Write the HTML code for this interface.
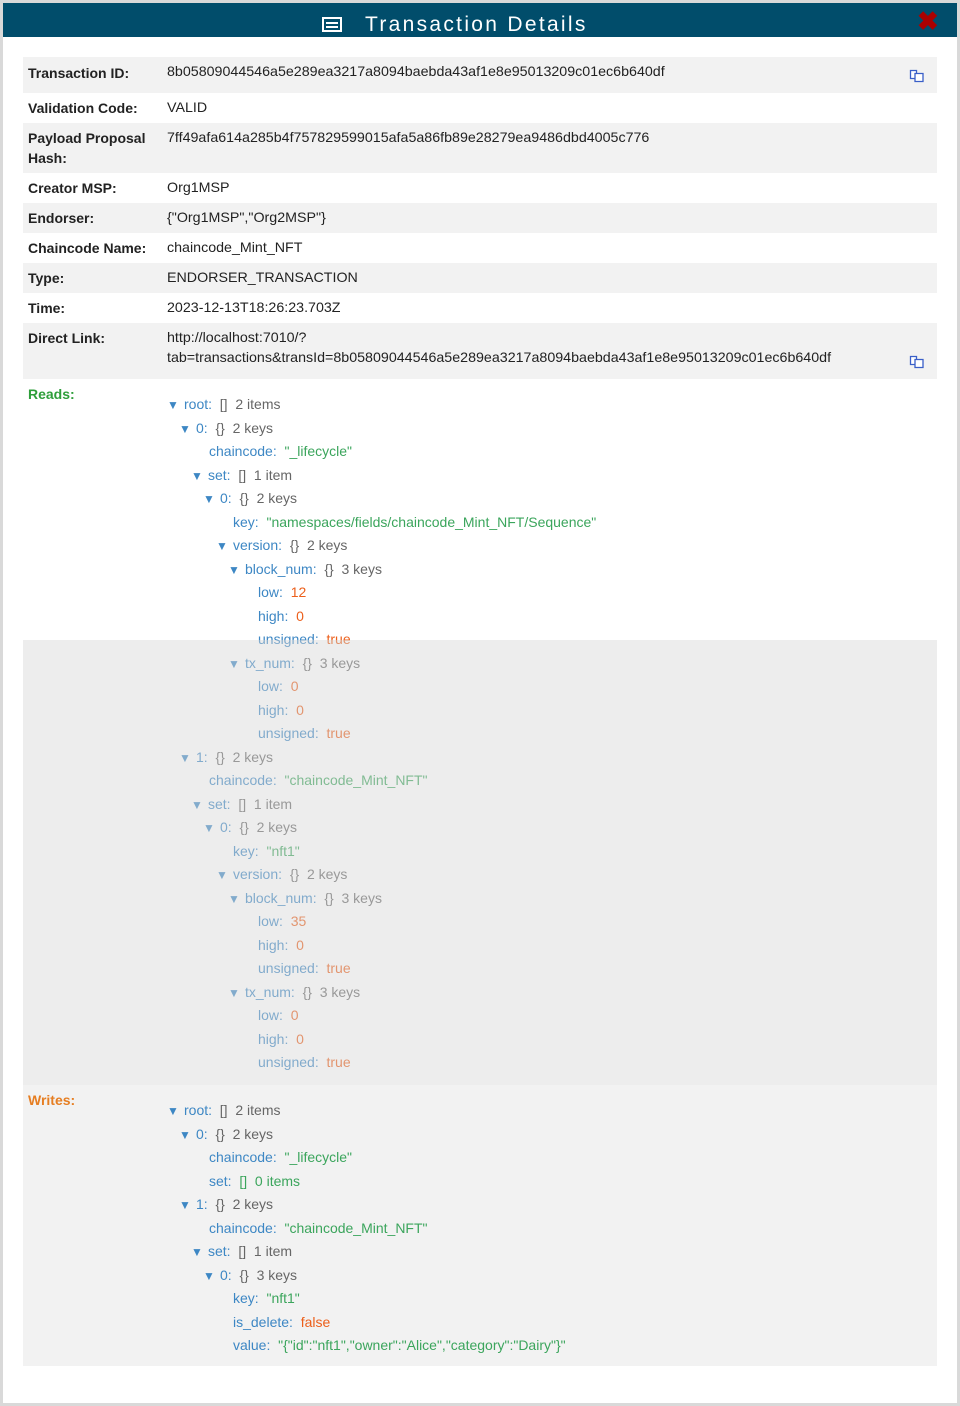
<!DOCTYPE html>
<html><head><meta charset="utf-8">
<style>
*{margin:0;padding:0;box-sizing:border-box}
html,body{width:960px;height:1406px;background:#d9d9d9;font-family:"Liberation Sans",Arial,sans-serif;font-size:14px;color:#222;overflow:hidden}
.modal{position:absolute;left:3px;top:3px;width:954px;height:1400px;background:#fff}
.hdr{position:absolute;left:0;top:0;width:954px;height:34px;background:#014d6b;color:#fff;font-size:21px;letter-spacing:2.3px;line-height:34px}
.hdr .t{position:absolute;left:362px;top:5px}
.ico{position:absolute;left:319px;top:14px;width:20px;height:15px;border:2px solid #fff;background:#014d6b}
.ico i{position:absolute;left:2px;right:2px;height:2px;background:#fff}
.x{position:absolute;left:914px;top:5px;color:#a00;font-size:26px;font-weight:bold;line-height:26px}
.row{position:absolute;left:20px;width:914px}
.g{background:#f2f2f2}
.lab{position:absolute;left:5px;font-weight:bold;line-height:20px}
.val{position:absolute;left:144px;line-height:20px;font-size:14.25px}
.cp{position:absolute;left:886px;width:16px;height:16px}
.tree div{position:absolute;white-space:nowrap;line-height:20px}
.k{color:#3d87c4}.s{color:#3ba55c}.n{color:#ec5f1b}.m{color:#666}
.tri{color:#3d87c4;font-size:12px;display:inline-block;width:17px}
</style></head><body>
<div class="modal">
<div class="hdr"><div class="ico"><i style="top:3px"></i><i style="top:7px"></i></div><span class="t">Transaction Details</span><span class="x">✖</span></div>

<div class="row g" style="top:54px;height:36px"><div class="lab" style="top:6px">Transaction ID:</div><div class="val" style="top:5px">8b05809044546a5e289ea3217a8094baebda43af1e8e95013209c01ec6b640df</div>
<svg class="cp" style="top:10px" viewBox="0 0 16 16"><path d="M1.5 3.5h6v8h-6z" fill="#fff" stroke="#3a5fc8" stroke-width="1.3"/><path d="M6 6.5h8v8H6z" fill="#fff" stroke="#3a5fc8" stroke-width="1.3"/></svg></div>
<div class="row" style="top:90px;height:30px"><div class="lab" style="top:5px">Validation Code:</div><div class="val" style="top:5px">VALID</div></div>
<div class="row g" style="top:120px;height:50px"><div class="lab" style="top:5px">Payload Proposal<br>Hash:</div><div class="val" style="top:5px">7ff49afa614a285b4f757829599015afa5a86fb89e28279ea9486dbd4005c776</div></div>
<div class="row" style="top:170px;height:30px"><div class="lab" style="top:5px">Creator MSP:</div><div class="val" style="top:5px">Org1MSP</div></div>
<div class="row g" style="top:200px;height:30px"><div class="lab" style="top:5px">Endorser:</div><div class="val" style="top:5px">{"Org1MSP","Org2MSP"}</div></div>
<div class="row" style="top:230px;height:30px"><div class="lab" style="top:5px">Chaincode Name:</div><div class="val" style="top:5px">chaincode_Mint_NFT</div></div>
<div class="row g" style="top:260px;height:30px"><div class="lab" style="top:5px">Type:</div><div class="val" style="top:5px">ENDORSER_TRANSACTION</div></div>
<div class="row" style="top:290px;height:30px"><div class="lab" style="top:5px">Time:</div><div class="val" style="top:5px">2023-12-13T18:26:23.703Z</div></div>
<div class="row g" style="top:320px;height:56px"><div class="lab" style="top:5px">Direct Link:</div><div class="val" style="top:5px">http://localhost:7010/?<br>tab=transactions&amp;transId=8b05809044546a5e289ea3217a8094baebda43af1e8e95013209c01ec6b640df</div>
<svg class="cp" style="top:30px" viewBox="0 0 16 16"><path d="M1.5 3.5h6v8h-6z" fill="#fff" stroke="#3a5fc8" stroke-width="1.3"/><path d="M6 6.5h8v8H6z" fill="#fff" stroke="#3a5fc8" stroke-width="1.3"/></svg></div>
<div class="row" style="top:376px;height:706px"><div class="lab" style="top:5px;color:#2e9e3a">Reads:</div></div>
<div class="row g" style="top:1082px;height:281px"><div class="lab" style="top:5px;color:#e67e22">Writes:</div></div>
</div>
<div class="tree" style="position:absolute;left:3px;top:3px">
<div style="top:391px;left:164px"><span class="tri">▼</span><span class="k">root:</span>&nbsp; <span class="m">[]&nbsp;&nbsp;2 items</span></div>
<div style="top:414.5px;left:176px"><span class="tri">▼</span><span class="k">0:</span>&nbsp; <span class="m">{}&nbsp;&nbsp;2 keys</span></div>
<div style="top:438px;left:206px"><span class="k">chaincode:</span>&nbsp; <span class="s">"_lifecycle"</span></div>
<div style="top:461.5px;left:188px"><span class="tri">▼</span><span class="k">set:</span>&nbsp; <span class="m">[]&nbsp;&nbsp;1 item</span></div>
<div style="top:485px;left:200px"><span class="tri">▼</span><span class="k">0:</span>&nbsp; <span class="m">{}&nbsp;&nbsp;2 keys</span></div>
<div style="top:508.5px;left:230px"><span class="k">key:</span>&nbsp; <span class="s">"namespaces/fields/chaincode_Mint_NFT/Sequence"</span></div>
<div style="top:532px;left:213px"><span class="tri">▼</span><span class="k">version:</span>&nbsp; <span class="m">{}&nbsp;&nbsp;2 keys</span></div>
<div style="top:555.5px;left:225px"><span class="tri">▼</span><span class="k">block_num:</span>&nbsp; <span class="m">{}&nbsp;&nbsp;3 keys</span></div>
<div style="top:579px;left:255px"><span class="k">low:</span>&nbsp; <span class="n">12</span></div>
<div style="top:602.5px;left:255px"><span class="k">high:</span>&nbsp; <span class="n">0</span></div>
<div style="top:626px;left:255px"><span class="k">unsigned:</span>&nbsp; <span class="n">true</span></div>
<div style="top:649.5px;left:225px"><span class="tri">▼</span><span class="k">tx_num:</span>&nbsp; <span class="m">{}&nbsp;&nbsp;3 keys</span></div>
<div style="top:673px;left:255px"><span class="k">low:</span>&nbsp; <span class="n">0</span></div>
<div style="top:696.5px;left:255px"><span class="k">high:</span>&nbsp; <span class="n">0</span></div>
<div style="top:720px;left:255px"><span class="k">unsigned:</span>&nbsp; <span class="n">true</span></div>
<div style="top:743.5px;left:176px"><span class="tri">▼</span><span class="k">1:</span>&nbsp; <span class="m">{}&nbsp;&nbsp;2 keys</span></div>
<div style="top:767px;left:206px"><span class="k">chaincode:</span>&nbsp; <span class="s">"chaincode_Mint_NFT"</span></div>
<div style="top:790.5px;left:188px"><span class="tri">▼</span><span class="k">set:</span>&nbsp; <span class="m">[]&nbsp;&nbsp;1 item</span></div>
<div style="top:814px;left:200px"><span class="tri">▼</span><span class="k">0:</span>&nbsp; <span class="m">{}&nbsp;&nbsp;2 keys</span></div>
<div style="top:837.5px;left:230px"><span class="k">key:</span>&nbsp; <span class="s">"nft1"</span></div>
<div style="top:861px;left:213px"><span class="tri">▼</span><span class="k">version:</span>&nbsp; <span class="m">{}&nbsp;&nbsp;2 keys</span></div>
<div style="top:884.5px;left:225px"><span class="tri">▼</span><span class="k">block_num:</span>&nbsp; <span class="m">{}&nbsp;&nbsp;3 keys</span></div>
<div style="top:908px;left:255px"><span class="k">low:</span>&nbsp; <span class="n">35</span></div>
<div style="top:931.5px;left:255px"><span class="k">high:</span>&nbsp; <span class="n">0</span></div>
<div style="top:955px;left:255px"><span class="k">unsigned:</span>&nbsp; <span class="n">true</span></div>
<div style="top:978.5px;left:225px"><span class="tri">▼</span><span class="k">tx_num:</span>&nbsp; <span class="m">{}&nbsp;&nbsp;3 keys</span></div>
<div style="top:1002px;left:255px"><span class="k">low:</span>&nbsp; <span class="n">0</span></div>
<div style="top:1025.5px;left:255px"><span class="k">high:</span>&nbsp; <span class="n">0</span></div>
<div style="top:1049px;left:255px"><span class="k">unsigned:</span>&nbsp; <span class="n">true</span></div>
<div style="top:1097px;left:164px"><span class="tri">▼</span><span class="k">root:</span>&nbsp; <span class="m">[]&nbsp;&nbsp;2 items</span></div>
<div style="top:1120.5px;left:176px"><span class="tri">▼</span><span class="k">0:</span>&nbsp; <span class="m">{}&nbsp;&nbsp;2 keys</span></div>
<div style="top:1144px;left:206px"><span class="k">chaincode:</span>&nbsp; <span class="s">"_lifecycle"</span></div>
<div style="top:1167.5px;left:206px"><span class="k">set:</span>&nbsp; <span class="s">[]&nbsp;&nbsp;0 items</span></div>
<div style="top:1191px;left:176px"><span class="tri">▼</span><span class="k">1:</span>&nbsp; <span class="m">{}&nbsp;&nbsp;2 keys</span></div>
<div style="top:1214.5px;left:206px"><span class="k">chaincode:</span>&nbsp; <span class="s">"chaincode_Mint_NFT"</span></div>
<div style="top:1238px;left:188px"><span class="tri">▼</span><span class="k">set:</span>&nbsp; <span class="m">[]&nbsp;&nbsp;1 item</span></div>
<div style="top:1261.5px;left:200px"><span class="tri">▼</span><span class="k">0:</span>&nbsp; <span class="m">{}&nbsp;&nbsp;3 keys</span></div>
<div style="top:1285px;left:230px"><span class="k">key:</span>&nbsp; <span class="s">"nft1"</span></div>
<div style="top:1308.5px;left:230px"><span class="k">is_delete:</span>&nbsp; <span class="n">false</span></div>
<div style="top:1332px;left:230px"><span class="k">value:</span>&nbsp; <span class="s">"{"id":"nft1","owner":"Alice","category":"Dairy"}"</span></div>
</div>
<div style="position:absolute;left:23px;top:640px;width:914px;height:445px;background:rgba(214,214,214,.45)"></div>
</body></html>
